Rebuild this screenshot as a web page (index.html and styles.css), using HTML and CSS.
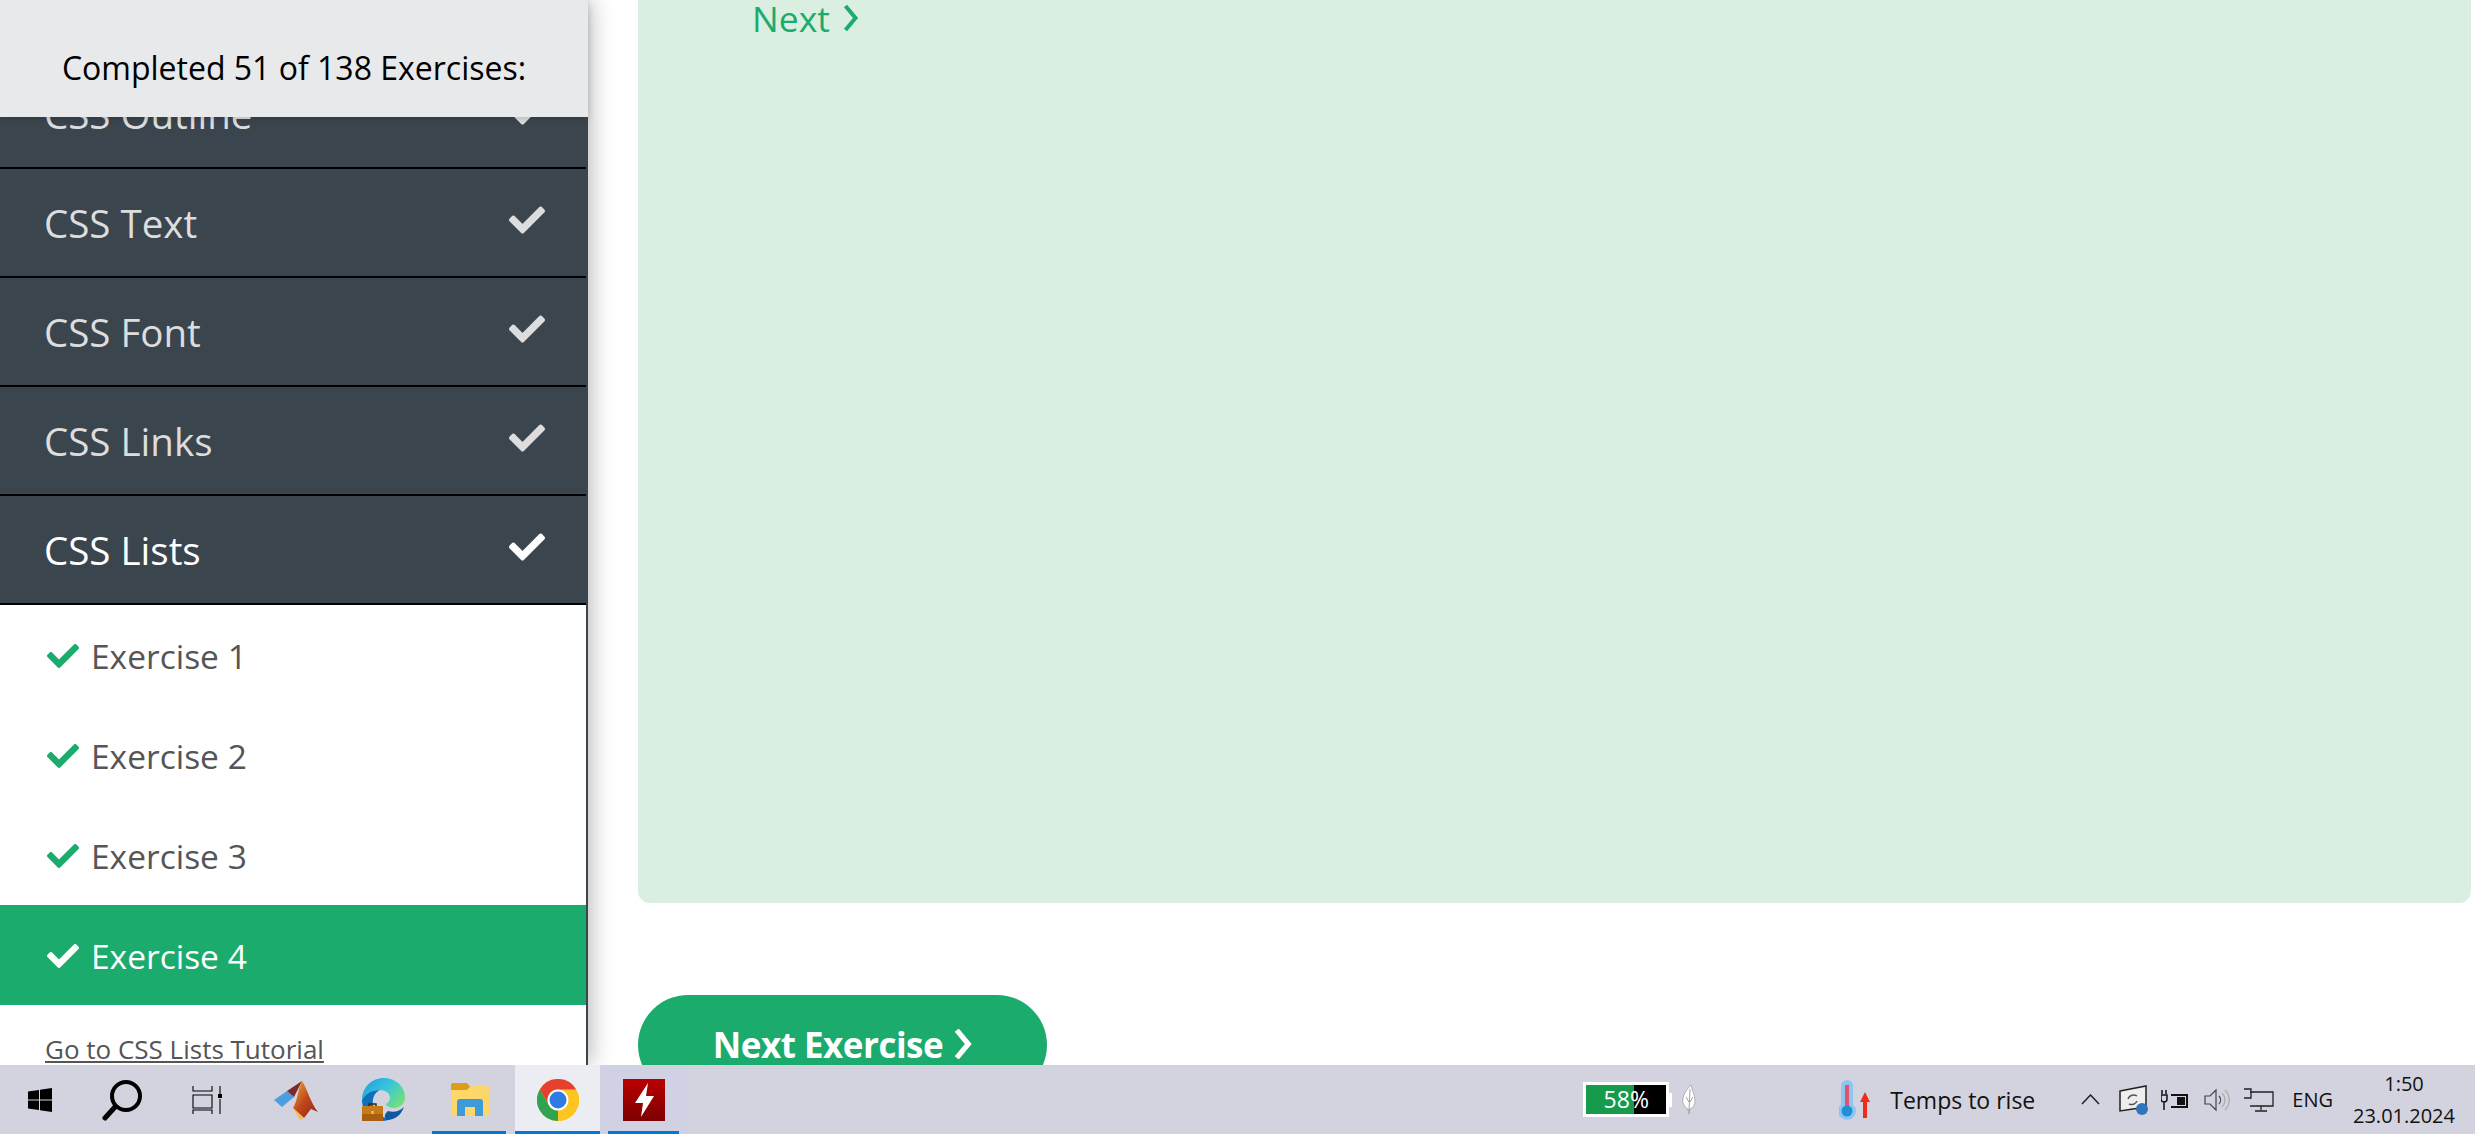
FILE: index.html
```html
<!DOCTYPE html>
<html lang="en">
  <head>
    <meta charset="UTF-8" />
    <title>CSS Lists Exercise</title>
    <link rel="stylesheet" href="styles.css">
  </head>
  <body>
    <svg class="defs" aria-hidden="true">
      <symbol id="check" viewBox="0 0 512 512">
        <path d="M173.898 439.404l-166.4-166.4c-9.997-9.997-9.997-26.206 0-36.204l36.203-36.204c9.997-9.998 26.207-9.998 36.204 0L192 312.69 432.095 72.596c9.997-9.997 26.207-9.997 36.204 0l36.203 36.204c9.997 9.997 9.997 26.206 0 36.204l-294.4 294.401c-9.998 9.997-26.207 9.997-36.204-.001z" />
      </symbol>
      <symbol id="chevron" viewBox="0 0 16 26">
        <path d="M3 1 13 13 3 25" fill="none" stroke="currentColor" />
      </symbol>
    </svg>

    <div class="screen">
      <div class="page">
        <aside class="sidebar">
          <div class="progress">Completed 51 of 138 Exercises:</div>
          <div class="chapters">
            <div class="chapter">CSS Outline <svg class="chapter-check"><use href="#check" /></svg></div>
            <div class="chapter">CSS Text <svg class="chapter-check"><use href="#check" /></svg></div>
            <div class="chapter">CSS Font <svg class="chapter-check"><use href="#check" /></svg></div>
            <div class="chapter">CSS Links <svg class="chapter-check"><use href="#check" /></svg></div>
            <div class="chapter chapter-open">CSS Lists <svg class="chapter-check"><use href="#check" /></svg></div>
          </div>
          <ul class="exercises">
            <li class="exercise"><svg class="exercise-check"><use href="#check" /></svg>Exercise 1</li>
            <li class="exercise"><svg class="exercise-check"><use href="#check" /></svg>Exercise 2</li>
            <li class="exercise"><svg class="exercise-check"><use href="#check" /></svg>Exercise 3</li>
            <li class="exercise exercise-current"><svg class="exercise-check"><use href="#check" /></svg>Exercise 4</li>
          </ul>
          <a class="tutorial-link" href="#">Go to CSS Lists Tutorial</a>
        </aside>

        <main class="content">
          <div class="answer-box">
            <a class="next-link" href="#">Next <svg class="next-chevron"><use href="#chevron" /></svg></a>
          </div>
          <a class="next-button" href="#">Next Exercise <svg class="button-chevron"><use href="#chevron" /></svg></a>
        </main>
      </div>

      <footer class="taskbar">
        <div class="slot slot-start">
          <svg width="24" height="24" viewBox="0 0 24 24"><path d="M0 3.5 11 2v9.4H0zM12 1.8 24 0v11.4H12zM0 12.6h11V22L0 20.5zM12 12.6h12V24l-12-1.800z" /></svg>
        </div>
        <div class="slot slot-search">
          <svg width="42" height="42" viewBox="0 0 42 42" fill="none" stroke="#000"><circle cx="25" cy="17" r="14" stroke-width="4" /><path d="M14 28 4 39" stroke-width="5" stroke-linecap="round" /></svg>
        </div>
        <div class="slot slot-tasks">
          <svg width="30" height="28" viewBox="0 0 30 28" fill="none" stroke="#000" stroke-width="1.100"><path d="M1 0v5h19V0M1 9h19v13H1zM1 28v-4h19v4M28 0v9M28 13v15" /><rect x="26" y="8" width="4" height="4" fill="#000" stroke="none" /></svg>
        </div>
        <div class="slot slot-matlab">
          <svg width="44" height="40" viewBox="0 0 44 40">
            <defs>
              <linearGradient id="matlab-peak" x1="0" y1="0" x2="1" y2="1"><stop offset="0" stop-color="#e8b23a" /><stop offset=".5" stop-color="#c2461c" /><stop offset="1" stop-color="#8c2412" /></linearGradient>
            </defs>
            <path d="M0 20 13 11 20 17 8 27z" fill="#4a9fdc" />
            <path d="M13 11 28 1 20 17z" fill="#7d2a2c" />
            <path d="M28 1C33 8 37 24 44 32L37 29 30 38 19 28C24 20 24 8 28 1z" fill="url(#matlab-peak)" />
            <path d="M19 28 30 38 26 40z" fill="#eec04a" />
          </svg>
        </div>
        <div class="slot slot-edge">
          <svg width="43" height="43" viewBox="0 0 43 43">
            <defs>
              <linearGradient id="edge-swirl" x1="0" y1="0" x2="1" y2=".7"><stop offset="0" stop-color="#1a9ad8" /><stop offset=".5" stop-color="#35c4e0" /><stop offset="1" stop-color="#6fe07a" /></linearGradient>
            </defs>
            <path d="M0 22C0 9 10 0 22 0c12 0 21 9 21 19 0 7-5 11-11 11-4 0-8-2-8-4 2-1 4-3 4-6 0-5-5-8-10-8C9 12 3 16 0 22z" fill="url(#edge-swirl)" />
            <path d="M0 22c3-6 9-10 18-10-5 2-8 8-7 14 1 8 8 14 17 15-2 1-4 2-7 2C9 43 0 33 0 22z" fill="#0d71b9" />
            <path d="M26 33c6 2 12 0 16-4-3 8-9 13-17 13-3-2-3-6 1-9z" fill="#0f57a0" />
            <rect x="0" y="28" width="21" height="15" rx="1" fill="#c67a1a" />
            <rect x="0" y="36" width="21" height="7" fill="#a85f10" />
            <path d="M7 28v-2h7v2" fill="none" stroke="#3a2a14" stroke-width="1.500" />
            <rect x="9.500" y="33" width="2" height="3" fill="#f2cc4a" />
          </svg>
        </div>
        <div class="slot slot-folder slot-running">
          <svg width="38" height="34" viewBox="0 0 38 34">
            <path d="M0 2a2 2 0 0 1 2-2h14l4 5-4 2H0z" fill="#dc9e16" />
            <path d="M0 7 16 7 20 3h16a2 2 0 0 1 2 2v26a2 2 0 0 1-2 2H2a2 2 0 0 1-2-2z" fill="#fdd769" />
            <path d="M6 33V19a3 3 0 0 1 3-3h20a3 3 0 0 1 3 3v14h-8v-9H14v9z" fill="#3e9ad8" />
          </svg>
        </div>
        <div class="slot slot-chrome slot-running">
          <svg width="42" height="42" viewBox="0 0 42 42">
            <circle cx="21" cy="21" r="21" fill="#fcc520" />
            <path d="M2.800 10.500A21 21 0 0 1 39.200 10.500H21A10.500 10.500 0 0 0 11.900 26.250z" fill="#e8402f" />
            <path d="M2.800 10.500 11.900 26.250A10.500 10.500 0 0 0 21 31.500L21 42A21 21 0 0 1 2.800 10.500z" fill="#2fa34f" />
            <path d="M21 42 30.100 26.250A10.500 10.500 0 0 0 39.200 10.500 21 21 0 0 1 21 42z" fill="#fcc520" />
            <circle cx="21" cy="21" r="10.500" fill="#fff" />
            <circle cx="21" cy="21" r="8.500" fill="#2f7be6" />
          </svg>
        </div>
        <div class="slot slot-flash slot-running">
          <svg width="42" height="42" viewBox="0 0 42 42">
            <defs>
              <linearGradient id="flash-bg" x1="0" y1="0" x2="0" y2="1"><stop offset="0" stop-color="#bb0000" /><stop offset="1" stop-color="#7d0000" /></linearGradient>
            </defs>
            <rect width="42" height="42" fill="url(#flash-bg)" />
            <path d="M25 4 12 24h8l-2 14 13-21h-8z" fill="#fff" />
          </svg>
        </div>

        <div class="tray">
          <div class="battery-meter">
            <span class="battery-fill"></span>
            <span class="battery-label">58%</span>
          </div>
          <span class="battery-nub"></span>
          <svg class="feather" width="14" height="29" viewBox="0 0 14 29"><path d="M9 0C3 6 0 12 1 18c1 3 3 5 5 6l1 5 1-5c3-1 5-4 5-8C13 10 10 5 9 0z" fill="#fff" stroke="#8a8a8a" stroke-width=".6" /><path d="M8 4 7 26M4 12l3 5M11 12l-3 5" fill="none" stroke="#777" stroke-width=".7" /></svg>

          <svg class="thermometer" width="32" height="40" viewBox="0 0 32 40">
            <rect x="2" y="0" width="12" height="30" rx="6" fill="#8fc4f0" />
            <circle cx="8" cy="31" r="9" fill="#8fc4f0" />
            <rect x="6" y="5" width="4" height="21" fill="#e0526c" />
            <circle cx="8" cy="31" r="5.500" fill="#1f8fd6" />
            <path d="M26 12 31 22H28V38H24V22H21z" fill="#ee2b1c" />
          </svg>
          <span class="weather">Temps to rise</span>

          <svg class="tray-arrow" width="19" height="11" viewBox="0 0 19 11" fill="none" stroke="#222" stroke-width="1.500"><path d="M1 10 9.500 1 18 10" /></svg>
          <svg class="tray-sync" width="30" height="30" viewBox="0 0 30 30">
            <path d="M1 6 27 1V22L1 26z" fill="#eeeeee" stroke="#222" stroke-width="1.500" />
            <path d="M9 14a6 6 0 0 1 9-3M18 16a6 6 0 0 1-8 3" fill="none" stroke="#555" stroke-width="1.500" />
            <circle cx="23" cy="24" r="6" fill="#2f74c0" />
          </svg>
          <svg class="tray-power" width="28" height="22" viewBox="0 0 28 22" fill="none" stroke="#111" stroke-width="2"><path d="M10 6H26V18H10" /><path d="M5 1v4M1 1v4M0 6h6v4a3 3 0 0 1-6 0zM3 13v8" stroke-width="1.500" /><rect x="16" y="8" width="8" height="8" fill="#111" stroke="none" /></svg>
          <svg class="tray-speaker" width="26" height="26" viewBox="0 0 26 26" fill="none" stroke="#444" stroke-width="1.200"><path d="M1 9H6L12 3V23L6 17H1z" /><path d="M15 9a6 6 0 0 1 0 8" /><path d="M18 6a10 10 0 0 1 0 14M21 3a14 14 0 0 1 0 20" stroke="#aaa" /></svg>
          <svg class="tray-network" width="30" height="24" viewBox="0 0 30 24" fill="none" stroke="#222" stroke-width="1.300"><path d="M6 4H29V18H6M17 18v4M11 23H23M0 1H7V10H0" /></svg>
          <span class="tray-lang">ENG</span>
          <div class="tray-clock">
            <span>1:50</span>
            <span>23.01.2024</span>
          </div>
        </div>
      </footer>
    </div>
  </body>
</html>
```

FILE: styles.css
```css
html,
body {
  margin: 0;
  height: 100%;
  overflow: hidden;
}

body {
  font-family: "Open Sans", "Noto Sans", sans-serif;
  color: #000;
  background-color: #fff;
}

.defs {
  display: none;
}

.screen {
  display: flex;
  flex-direction: column;
  height: 100vh;
}

.page {
  display: flex;
  flex: 1;
  min-height: 0;
  overflow: hidden;
}

/* Sidebar */
.sidebar {
  flex: 0 0 588px;
  min-width: 0;
  box-sizing: border-box;
  height: 100%;
  background-color: #fff;
  border-right: 2px solid #3b454e;
  box-shadow: 2px 0 22px rgba(0, 0, 0, 0.3);
  z-index: 2;
}

.progress {
  position: relative;
  z-index: 1;
  display: flex;
  align-items: center;
  justify-content: center;
  box-sizing: border-box;
  width: 588px;
  height: 117px;
  padding-top: 17px;
  font-size: 32px;
  background-color: #e7e9eb;
  box-shadow: 0 2px 6px rgba(0, 0, 0, 0.15);
}

/* first chapter is scrolled under the progress header */
.chapters {
  margin-top: -57px;
}

.chapter {
  display: flex;
  align-items: center;
  justify-content: space-between;
  box-sizing: border-box;
  height: 109px;
  padding: 0 41px 0 44px;
  font-size: 38.5px;
  color: #dddddd;
  background-color: #3b454e;
  border-bottom: 2px solid #000;
}

.chapter-check {
  width: 36px;
  height: 36px;
  margin-top: -5px;
  fill: #dddddd;
  stroke: #dddddd;
  stroke-width: 1.5px;
}

.chapter-open {
  color: #fff;
}

.chapter-open .chapter-check {
  fill: #fff;
  stroke: #fff;
}

.exercises {
  list-style: none;
  margin: 0;
  padding: 0;
}

.exercise {
  display: flex;
  align-items: center;
  box-sizing: border-box;
  height: 100px;
  padding: 2px 0 0 47px;
  font-size: 33.5px;
  color: #555555;
}

.exercise-check {
  width: 32px;
  height: 32px;
  margin-right: 12px;
  fill: #1bab6d;
  stroke: #1bab6d;
  stroke-width: 1.5px;
}

.exercise-current {
  color: #fff;
  background-color: #1bab6d;
}

.exercise-current .exercise-check {
  fill: #fff;
  stroke: #fff;
}

.tutorial-link {
  display: block;
  margin: 26px 0 0 45px;
  font-size: 26px;
  color: #555555;
}

/* Main content */
.content {
  flex: 1;
  min-width: 0;
  padding: 0 4px 0 50px;
}

.answer-box {
  display: flow-root;
  box-sizing: border-box;
  height: 903px;
  padding-left: 114px;
  background-color: #dbeee2;
  border-radius: 0 0 12px 12px;
}

.next-link {
  display: flex;
  align-items: center;
  gap: 12px;
  font-size: 35.5px;
  line-height: 48px;
  margin-top: -6px;
  color: #1bab6d;
  text-decoration: none;
}

.next-chevron {
  width: 17px;
  height: 26px;
  stroke-width: 4px;
}

.next-button {
  display: flex;
  align-items: center;
  justify-content: center;
  gap: 10px;
  box-sizing: border-box;
  width: 409px;
  height: 100px;
  margin-top: 92px;
  padding-bottom: 2px;
  font-size: 35px;
  font-weight: 700;
  letter-spacing: -0.5px;
  color: #fff;
  text-decoration: none;
  background-color: #1bab6d;
  border-radius: 50px;
}

.button-chevron {
  width: 19px;
  height: 30px;
  stroke-width: 4.5px;
}

/* Windows taskbar */
.taskbar {
  position: relative;
  z-index: 3;
  display: flex;
  flex: 0 0 69px;
  align-items: center;
  background-color: #d2d3de;
}

.slot {
  position: relative;
  display: flex;
  align-items: center;
  justify-content: center;
  height: 69px;
}

.slot-start { width: 80px; }
.slot-search { width: 84px; }
.slot-tasks { width: 86px; }
.slot-matlab { width: 92px; }
.slot-edge { width: 82px; }
.slot-folder { width: 91px; }
.slot-chrome { width: 85px; background-color: #ecedf3; }
.slot-flash { width: 88px; background-color: #d0d1e3; }

.slot-running::after {
  content: "";
  position: absolute;
  bottom: 0;
  left: 8px;
  right: 9px;
  height: 3px;
  background-color: #0078d7;
}

.slot-chrome::after {
  left: 0;
  right: 0;
}

.tray {
  display: flex;
  align-items: center;
  margin-left: auto;
  padding-right: 22px;
  font-size: 23px;
  color: #111;
}

.battery-meter {
  position: relative;
  box-sizing: border-box;
  width: 86px;
  height: 35px;
  border: 3px solid #fff;
  background: linear-gradient(to right, #169a4b 0 60%, #000 60% 100%);
}

.battery-label {
  position: absolute;
  top: 0;
  left: 0;
  right: 0;
  line-height: 29px;
  text-align: center;
  color: #fff;
}

.battery-nub {
  width: 3px;
  height: 14px;
  background-color: #fff;
}

.feather {
  margin-left: 10px;
}

.thermometer {
  margin-left: 143px;
}

.weather {
  margin-left: 19px;
  width: 145px;
  white-space: nowrap;
}

.tray-arrow {
  margin-left: 46px;
}

.tray-sync {
  margin-left: 19px;
}

.tray-power {
  margin-left: 12px;
}

.tray-speaker {
  margin-left: 15px;
}

.tray-network {
  margin-left: 14px;
}

.tray-lang {
  margin-left: 18px;
  font-size: 20px;
}

.tray-clock {
  display: flex;
  flex-direction: column;
  align-items: center;
  gap: 9px;
  width: 98px;
  margin-left: 22px;
  font-size: 20px;
  line-height: 23px;
}
```
